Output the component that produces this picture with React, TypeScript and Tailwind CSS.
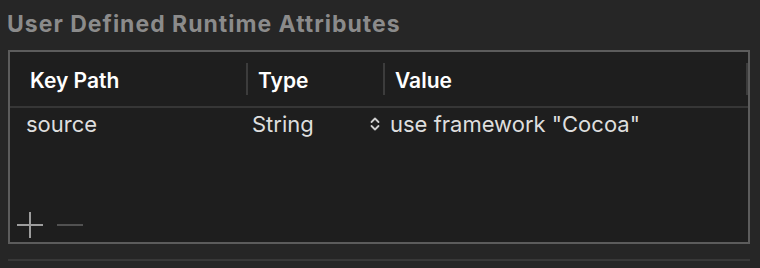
import React from "react";

const font = { fontFamily: "Inter, 'Liberation Sans', sans-serif" };

function Stepper() {
  return (
    <svg width="10" height="16" viewBox="0 0 10 16" className="shrink-0">
      <path d="M1.5 6 L5 2.5 L8.5 6" stroke="#cfcfcf" strokeWidth="1.8" fill="none" strokeLinecap="round" strokeLinejoin="round" />
      <path d="M1.5 10 L5 13.5 L8.5 10" stroke="#cfcfcf" strokeWidth="1.8" fill="none" strokeLinecap="round" strokeLinejoin="round" />
    </svg>
  );
}

export default function App() {
  return (
    <div className="w-[760px] h-[268px] bg-[#262626] overflow-hidden" style={font}>
      {/* section title */}
      <div className="pl-[7px] pt-[10px] h-[50px] text-[23px] font-bold text-[#8b8b8b] leading-[28px] tracking-[1px]">
        User Defined Runtime Attributes
      </div>

      {/* attributes table */}
      <div className="mx-[8px] w-[742px] h-[194px] border-2 border-[#5c5c5c] bg-[#1e1e1e] flex flex-col">
        <div className="h-[56px] border-b-2 border-[#363636] flex items-center text-white text-[21px] font-semibold">
          <div className="w-[236px] pl-[20px] pt-[3px]">Key Path</div>
          <div className="w-[2px] h-[32px] bg-[#3c3c3c]" />
          <div className="w-[135px] pl-[10px] pt-[3px]">Type</div>
          <div className="w-[2px] h-[32px] bg-[#3c3c3c]" />
          <div className="flex-1 pl-[10px] pt-[3px]">Value</div>
          <div className="w-[2px] h-[32px] bg-[#3c3c3c]" />
        </div>

        <div className="h-[32px] flex items-center text-[#dedede] text-[22px]">
          <div className="w-[242px] pl-[16px]">source</div>
          <div className="w-[118px]">String</div>
          <Stepper />
          <div className="pl-[10px]">use framework "Cocoa"</div>
        </div>

        <div className="flex-1" />

        <div className="h-[30px] flex items-start pl-[7px] gap-[14px]">
          <svg width="26" height="26" viewBox="0 0 26 26">
            <path d="M13 0 V26 M0 13 H26" stroke="#9d9d9d" strokeWidth="2" />
          </svg>
          <svg width="26" height="26" viewBox="0 0 26 26">
            <path d="M0 13 H26" stroke="#515151" strokeWidth="2" />
          </svg>
        </div>
      </div>

      <div className="mx-[8px] w-[742px] h-[2px] mt-[15px] bg-[#383838]" />
    </div>
  );
}
